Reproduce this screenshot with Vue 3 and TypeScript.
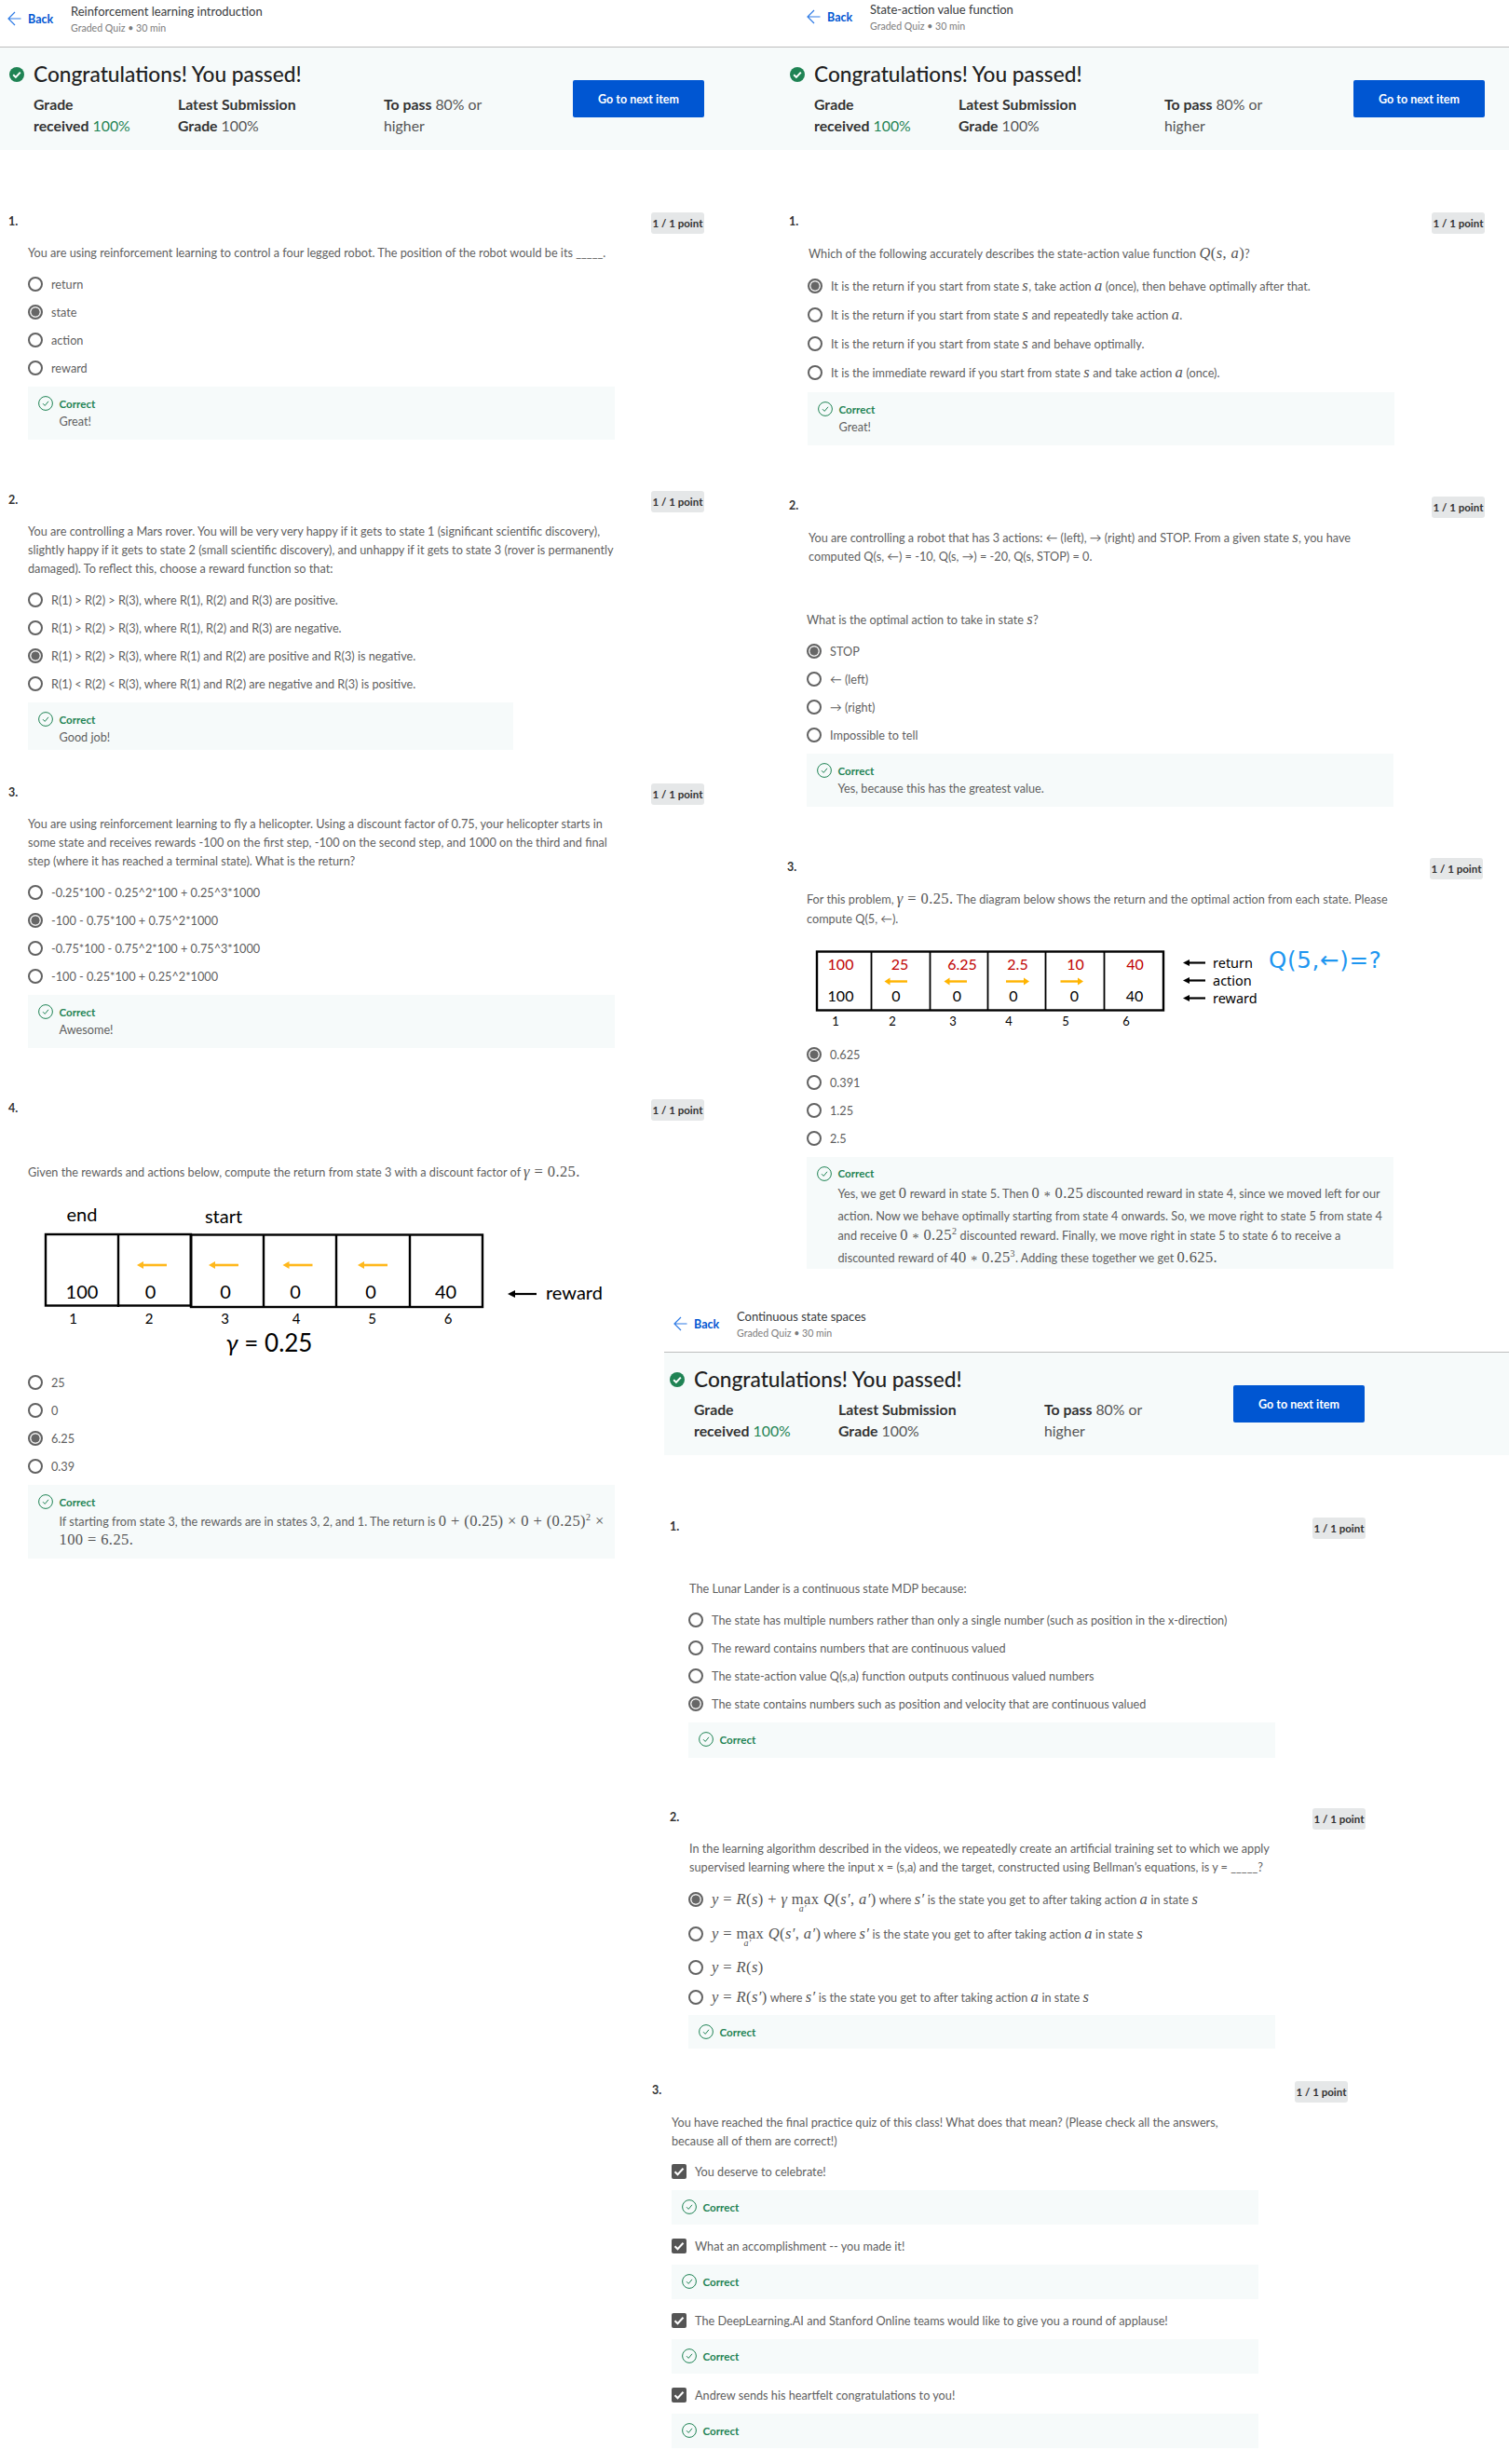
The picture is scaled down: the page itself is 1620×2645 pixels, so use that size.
<script setup lang="ts">
interface Option {
  html: string
  sel?: boolean
  h?: number
  fb?: boolean
}

interface Feedback {
  lines: string[]
  height: number
  lh?: number
  width?: number
}

interface Question {
  num: string
  gap: number
  x?: number
  promptGap: number
  lh?: number
  prompt: string
  prompt2?: string
  prompt2Gap?: number
  figure?: 'rewards' | 'returns'
  figureH?: number
  bodyX?: number
  rowH?: number
  optGap?: number
  check?: boolean
  options: Option[]
  fb?: Feedback
}

interface Quiz {
  cls: string
  title: string
  qx: number
  questions: Question[]
}

const ast = '<span class="ast">*</span>'

const quizzes: Quiz[] = [
  {
    cls: 'panel-a',
    title: 'Reinforcement learning introduction',
    qx: 9,
    questions: [
      {
        num: '1.', gap: 67, promptGap: 10,
        prompt: 'You are using reinforcement learning to control a four legged robot. The position of the robot would be its _____.',
        options: [{ html: 'return' }, { html: 'state', sel: true }, { html: 'action' }, { html: 'reward' }],
        fb: { lines: ['Great!'], height: 57 },
      },
      {
        num: '2.', gap: 55, promptGap: 10,
        prompt: 'You are controlling a Mars rover. You will be very very happy if it gets to state 1 (significant scientific discovery),<br>slightly happy if it gets to state 2 (small scientific discovery), and unhappy if it gets to state 3 (rover is permanently<br>damaged). To reflect this, choose a reward function so that:',
        options: [
          { html: 'R(1) &gt; R(2) &gt; R(3), where R(1), R(2) and R(3) are positive.' },
          { html: 'R(1) &gt; R(2) &gt; R(3), where R(1), R(2) and R(3) are negative.' },
          { html: 'R(1) &gt; R(2) &gt; R(3), where R(1) and R(2) are positive and R(3) is negative.', sel: true },
          { html: 'R(1) &lt; R(2) &lt; R(3), where R(1) and R(2) are negative and R(3) is positive.' },
        ],
        fb: { lines: ['Good job!'], height: 51, width: 521 },
      },
      {
        num: '3.', gap: 36, promptGap: 10,
        prompt: 'You are using reinforcement learning to fly a helicopter. Using a discount factor of 0.75, your helicopter starts in<br>some state and receives rewards -100 on the first step, -100 on the second step, and 1000 on the third and final<br>step (where it has reached a terminal state). What is the return?',
        options: [
          { html: '-0.25*100 - 0.25^2*100 + 0.25^3*1000' },
          { html: '-100 - 0.75*100 + 0.75^2*1000', sel: true },
          { html: '-0.75*100 - 0.75^2*100 + 0.75^3*1000' },
          { html: '-100 - 0.25*100 + 0.25^2*1000' },
        ],
        fb: { lines: ['Awesome!'], height: 57 },
      },
      {
        num: '4.', gap: 55, promptGap: 45,
        prompt: 'Given the rewards and actions below, compute the return from state 3 with a discount factor of <span class="m"><i>γ</i> = 0.25.</span>',
        figure: 'rewards', figureH: 201,
        options: [{ html: '25' }, { html: '0' }, { html: '6.25', sel: true }, { html: '0.39' }],
        fb: {
          lines: ['If starting from state 3, the rewards are in states 3, 2, and 1. The return is <span class="m">0 + (0.25) × 0 + (0.25)<sup>2</sup> ×</span>', '<span class="m">100 = 6.25.</span>'],
          height: 79, lh: 20,
        },
      },
    ],
  },
  {
    cls: 'panel-b',
    title: 'State-action value function',
    qx: 37,
    questions: [
      {
        num: '1.', gap: 67, promptGap: 11, bodyX: -1, rowH: 31.25,
        prompt: 'Which of the following accurately describes the state-action value function <span class="m"><i>Q</i>(<i>s</i>, <i>a</i>)</span>?',
        options: [
          { html: 'It is the return if you start from state <i class="m">s</i>, take action <i class="m">a</i> (once), then behave optimally after that.', sel: true },
          { html: 'It is the return if you start from state <i class="m">s</i> and repeatedly take action <i class="m">a</i>.' },
          { html: 'It is the return if you start from state <i class="m">s</i> and behave optimally.' },
          { html: 'It is the immediate reward if you start from state <i class="m">s</i> and take action <i class="m">a</i> (once).' },
        ],
        fb: { lines: ['Great!'], height: 57 },
      },
      {
        num: '2.', gap: 55, promptGap: 11, bodyX: -2,
        prompt: 'You are controlling a robot that has 3 actions: ← (left), → (right) and STOP. From a given state <i class="m">s</i>, you have<br>computed Q(s, ←) = -10, Q(s, →) = -20, Q(s, STOP) = 0.',
        prompt2: 'What is the optimal action to take in state <i class="m">s</i>?',
        prompt2Gap: 48,
        options: [{ html: 'STOP', sel: true }, { html: '← (left)' }, { html: '→ (right)' }, { html: 'Impossible to tell' }],
        fb: { lines: ['Yes, because this has the greatest value.'], height: 57 },
      },
      {
        num: '3.', gap: 55, x: -2, promptGap: 10, lh: 21,
        prompt: 'For this problem, <span class="m"><i>γ</i> = 0.25.</span> The diagram below shows the return and the optimal action from each state. Please<br>compute Q(5, ←).',
        figure: 'returns', figureH: 119.5,
        options: [{ html: '0.625', sel: true }, { html: '0.391' }, { html: '1.25' }, { html: '2.5' }],
        fb: {
          lines: [
            `Yes, we get <span class="m">0</span> reward in state 5. Then <span class="m">0 ${ast} 0.25</span> discounted reward in state 4, since we moved left for our`,
            'action. Now we behave optimally starting from state 4 onwards. So, we move right to state 5 from state 4',
            `and receive <span class="m">0 ${ast} 0.25<sup>2</sup></span> discounted reward. Finally, we move right in state 5 to state 6 to receive a`,
            `discounted reward of <span class="m">40 ${ast} 0.25<sup>3</sup></span>. Adding these together we get <span class="m">0.625.</span>`,
          ],
          height: 120, lh: 20.6,
        },
      },
    ],
  },
  {
    cls: 'panel-c',
    title: 'Continuous state spaces',
    qx: 19,
    questions: [
      {
        num: '1.', gap: 67, promptGap: 43, bodyX: -1,
        prompt: 'The Lunar Lander is a continuous state MDP because:',
        options: [
          { html: 'The state has multiple numbers rather than only a single number (such as position in the x-direction)' },
          { html: 'The reward contains numbers that are continuous valued' },
          { html: 'The state-action value Q(s,a) function outputs continuous valued numbers' },
          { html: 'The state contains numbers such as position and velocity that are continuous valued', sel: true },
        ],
        fb: { lines: [], height: 38 },
      },
      {
        num: '2.', gap: 54, promptGap: 10, bodyX: -1, optGap: 6,
        prompt: 'In the learning algorithm described in the videos, we repeatedly create an artificial training set to which we apply<br>supervised learning where the input x = (s,a) and the target, constructed using Bellman’s equations, is y = _____?',
        options: [
          { h: 37, sel: true, html: '<span class="m"><i>y</i> = <i>R</i>(<i>s</i>) + <i>γ</i> <span class="mx">max<span class="under"><i>a′</i></span></span> <i>Q</i>(<i>s′</i>, <i>a′</i>)</span> where <i class="m">s′</i> is the state you get to after taking action <i class="m">a</i> in state <i class="m">s</i>' },
          { h: 37, html: '<span class="m"><i>y</i> = <span class="mx">max<span class="under"><i>a′</i></span></span> <i>Q</i>(<i>s′</i>, <i>a′</i>)</span> where <i class="m">s′</i> is the state you get to after taking action <i class="m">a</i> in state <i class="m">s</i>' },
          { h: 36, html: '<span class="m"><i>y</i> = <i>R</i>(<i>s</i>)</span>' },
          { h: 28, html: '<span class="m"><i>y</i> = <i>R</i>(<i>s′</i>)</span> where <i class="m">s′</i> is the state you get to after taking action <i class="m">a</i> in state <i class="m">s</i>' },
        ],
        fb: { lines: [], height: 36 },
      },
      {
        num: '3.', gap: 35, x: -19, promptGap: 11, check: true, optGap: 8,
        prompt: 'You have reached the final practice quiz of this class! What does that mean? (Please check all the answers,<br>because all of them are correct!)',
        options: [
          { html: 'You deserve to celebrate!', fb: true },
          { html: 'What an accomplishment -- you made it!', fb: true },
          { html: 'The DeepLearning.AI and Stanford Online teams would like to give you a round of applause!', fb: true },
          { html: 'Andrew sends his heartfelt congratulations to you!', fb: true },
        ],
      },
    ],
  },
]

const rewardCells = [48, 127, 205, 283, 361, 440, 518]
const rewardValues = [
  { x: 88, t: '100' }, { x: 161.5, t: '0' }, { x: 242, t: '0' },
  { x: 317, t: '0' }, { x: 398, t: '0' }, { x: 478.5, t: '40' },
]
const rewardIndex = [78.5, 160, 241.5, 318, 399.5, 481]
const rewardArrows = [147, 224, 303.5, 384]

const returnCells = [876, 935.5, 998.5, 1060.5, 1122.5, 1185.5, 1249]
const returnTop = [
  { x: 902.5, t: '100' }, { x: 966, t: '25' }, { x: 1033, t: '6.25' },
  { x: 1092.5, t: '2.5' }, { x: 1154.5, t: '10' }, { x: 1218.5, t: '40' },
]
const returnBottom = [
  { x: 902.5, t: '100' }, { x: 962, t: '0' }, { x: 1027.5, t: '0' },
  { x: 1088, t: '0' }, { x: 1153.5, t: '0' }, { x: 1218, t: '40' },
]
const returnIndex = [897, 958, 1023, 1083, 1144, 1209]
const returnLabels = [
  { y: 1033, t: 'return' }, { y: 1052, t: 'action' }, { y: 1071, t: 'reward' },
]
</script>

<template>
  <div class="page">
    <section v-for="quiz in quizzes" :key="quiz.title" class="panel" :class="quiz.cls">
      <header class="hdr">
        <a class="back">
          <svg width="15" height="16" viewBox="0 0 15 16" fill="none" stroke="#2f7be5" stroke-width="1.2">
            <path d="M14.5 8H1M8 1L1 8l7 7" />
          </svg>
          <span>Back</span>
        </a>
        <div>
          <div class="hdr-title">{{ quiz.title }}</div>
          <div class="hdr-sub">Graded Quiz • 30 min</div>
        </div>
      </header>

      <div class="band">
        <div class="band-main">
          <h1 class="band-title">
            <svg width="16" height="16" viewBox="0 0 16 16">
              <circle cx="8" cy="8" r="8" fill="#1f8354" />
              <path d="M4.2 8.2l2.7 2.7 4.9-5.3" fill="none" stroke="#fff" stroke-width="2" />
            </svg>
            Congratulations! You passed!
          </h1>
          <div class="stats">
            <div><b>Grade</b><br><b>received</b> <span class="ok">100%</span></div>
            <div><b>Latest Submission</b><br><b>Grade</b> 100%</div>
            <div><b>To pass</b> 80% or<br>higher</div>
          </div>
        </div>
        <button class="next">Go to next item</button>
      </div>

      <div
        v-for="q in quiz.questions"
        :key="q.num"
        class="q"
        :style="{ marginTop: q.gap + 'px', marginLeft: quiz.qx + (q.x ?? 0) + 'px' }"
      >
        <div class="q-head">
          <span class="q-num">{{ q.num }}</span>
          <span class="q-badge">1 / 1 point</span>
        </div>
        <div class="body">
          <p class="prompt" :style="{ marginTop: q.promptGap + 'px', lineHeight: (q.lh ?? 20) + 'px' }" v-html="q.prompt"></p>
          <div class="shifted" :style="{ marginLeft: (q.bodyX ?? 0) + 'px' }">
            <p v-if="q.prompt2" class="prompt" :style="{ marginTop: q.prompt2Gap + 'px' }" v-html="q.prompt2"></p>

            <svg v-if="q.figure === 'rewards'" class="fig" width="630" :height="q.figureH" viewBox="30 1268 630 201">
              <text class="lbl" x="88" y="1303" font-size="20" text-anchor="middle" dominant-baseline="central">end</text>
              <text class="lbl" x="240" y="1305" font-size="20" text-anchor="middle" dominant-baseline="central">start</text>
              <rect x="49" y="1325" width="156" height="76.5" fill="none" stroke="#000" stroke-width="2.4" />
              <rect x="205" y="1325.5" width="313" height="77.5" fill="none" stroke="#000" stroke-width="2.4" />
              <line v-for="x in rewardCells.slice(1, 6)" :key="x" :x1="x" :x2="x" y1="1325" y2="1403" stroke="#000" stroke-width="2.4" />
              <g v-for="x in rewardArrows" :key="x">
                <path :d="`M${x + 6} 1358H${x + 32}`" stroke="#ffb81c" stroke-width="2.6" />
                <path :d="`M${x} 1358l7-4v8z`" fill="#ffb81c" />
              </g>
              <text v-for="v in rewardValues" :key="v.x" class="lbl" :x="v.x" y="1386" font-size="20" text-anchor="middle" dominant-baseline="central">{{ v.t }}</text>
              <text v-for="(x, i) in rewardIndex" :key="x" class="lbl" :x="x" y="1415" font-size="15" text-anchor="middle" dominant-baseline="central">{{ i + 1 }}</text>
              <text class="lbl" x="289" y="1441" font-size="26" text-anchor="middle" dominant-baseline="central"><tspan font-style="italic">γ</tspan> = 0.25</text>
              <path d="M551 1389H576" stroke="#000" stroke-width="2.2" />
              <path d="M545 1389l8-4v8z" fill="#000" />
              <text class="lbl" x="586" y="1387" font-size="20" dominant-baseline="central">reward</text>
            </svg>

            <svg v-if="q.figure === 'returns'" class="fig" width="630" :height="q.figureH" viewBox="866 997.5 630 119.5">
              <rect x="877" y="1022" width="372" height="63" fill="none" stroke="#000" stroke-width="2.4" />
              <line v-for="x in returnCells.slice(1, 6)" :key="x" :x1="x" :x2="x" y1="1022" y2="1085" stroke="#000" stroke-width="1.8" />
              <text v-for="v in returnTop" :key="v.x" class="lbl" :x="v.x" y="1035" font-size="16" fill="#c00000" text-anchor="middle" dominant-baseline="central">{{ v.t }}</text>
              <text v-for="v in returnBottom" :key="v.x" class="lbl" :x="v.x" y="1069" font-size="16" text-anchor="middle" dominant-baseline="central">{{ v.t }}</text>
              <g fill="#ffb400">
                <path d="M954 1054H974" stroke="#ffb400" stroke-width="2.4" /><path d="M949.5 1054l6-4v8z" />
                <path d="M1018 1054H1038" stroke="#ffb400" stroke-width="2.4" /><path d="M1013.5 1054l6-4v8z" />
                <path d="M1080 1054H1100" stroke="#ffb400" stroke-width="2.4" /><path d="M1105 1054l-6-4v8z" />
                <path d="M1138.5 1054H1158" stroke="#ffb400" stroke-width="2.4" /><path d="M1163 1054l-6-4v8z" />
              </g>
              <text v-for="(x, i) in returnIndex" :key="x" class="lbl" :x="x" y="1096" font-size="13" text-anchor="middle" dominant-baseline="central">{{ i + 1 }}</text>
              <g v-for="l in returnLabels" :key="l.t">
                <path :d="`M1275 ${l.y + 1}H1294`" stroke="#000" stroke-width="2.2" />
                <path :d="`M1270 ${l.y + 1}l7-3.6v7.2z`" />
                <text class="lbl-sm" x="1302" :y="l.y" font-size="14.5" dominant-baseline="central">{{ l.t }}</text>
              </g>
              <text class="hand" x="1362" y="1031" font-size="24.5" dominant-baseline="central">Q(5,←)=?</text>
            </svg>

            <template v-for="(o, i) in q.options" :key="o.html">
              <div class="opt" :style="{ height: (o.h ?? q.rowH ?? 30) + 'px', marginTop: i === 0 && !q.figure ? (q.optGap ?? 9) + 'px' : undefined }">
                <span v-if="q.check" class="box">
                  <svg width="16" height="16" viewBox="0 0 16 16">
                    <path d="M3.5 8.2l3 3 6-6.4" fill="none" stroke="#fff" stroke-width="2" />
                  </svg>
                </span>
                <span v-else class="radio" :class="{ on: o.sel }"></span>
                <span class="opt-text" v-html="o.html"></span>
              </div>
              <div v-if="o.fb" class="fb fb-row">
                <svg class="fb-ico" width="16" height="16" viewBox="0 0 16 16" fill="none" stroke="#1f8354">
                  <circle cx="8" cy="8" r="7.4" />
                  <path d="M5 8.2l2.2 2.2 3.8-4.6" />
                </svg>
                <div><div class="fb-ok">Correct</div></div>
              </div>
            </template>

            <div v-if="q.fb" class="fb" :style="{ height: q.fb.height + 'px', width: (q.fb.width ?? 630) + 'px', lineHeight: (q.fb.lh ?? 19) + 'px' }">
              <svg class="fb-ico" width="16" height="16" viewBox="0 0 16 16" fill="none" stroke="#1f8354">
                <circle cx="8" cy="8" r="7.4" />
                <path d="M5 8.2l2.2 2.2 3.8-4.6" />
              </svg>
              <div>
                <div class="fb-ok">Correct</div>
                <div v-for="l in q.fb.lines" :key="l" v-html="l"></div>
              </div>
            </div>
          </div>
        </div>
      </div>
    </section>
  </div>
</template>

<style scoped>
.page {
  display: grid;
  grid-template-columns: 700px 110px 810px;
  grid-template-rows: 1401px 1244px;
  width: 1620px;
  height: 2645px;
  overflow: hidden;
  background: #fff;
  color: #5f5f5f;
  font-family: Lato, "Noto Sans", sans-serif;
  font-size: 12.7px;
}

.panel-a {
  grid-column: 1 / 3;
  grid-row: 1 / 3;
}

.panel-b {
  grid-column: 3;
  grid-row: 1;
}

.panel-c {
  grid-column: 2 / 4;
  grid-row: 2;
}

.hdr {
  display: flex;
  align-items: flex-start;
  height: 51px;
  padding-top: 3px;
  padding-left: 8px;
  border-bottom: 1px solid #bdbdbd;
  box-sizing: border-box;
}

.panel-b .hdr {
  padding-top: 1px;
  padding-left: 56px;
}

.panel-c .hdr {
  margin-left: 13px;
  padding-left: 10px;
}

.back {
  display: flex;
  align-items: center;
  gap: 7px;
  width: 68px;
  height: 34px;
  color: #0056d2;
  font-weight: 700;
  font-size: 12.5px;
}

.hdr-title {
  color: #373a3c;
  font-size: 13px;
  line-height: 18px;
}

.hdr-sub {
  color: #7c7c7c;
  font-size: 10.6px;
  line-height: 18px;
}

.band {
  display: flex;
  align-items: flex-start;
  height: 110px;
  padding-top: 14px;
  padding-left: 10px;
  background: #f6fafa;
  box-sizing: border-box;
}

.panel-b .band {
  padding-left: 38px;
}

.panel-c .band {
  margin-left: 13px;
  padding-left: 6px;
}

.band-main {
  width: 605px;
}

.band-title {
  display: flex;
  align-items: center;
  gap: 10px;
  margin: 0;
  color: #1f1f1f;
  font-size: 22.7px;
  font-weight: 500;
  line-height: 30px;
}

.stats {
  display: grid;
  grid-template-columns: 155px 221px auto;
  margin-top: 5px;
  margin-left: 26px;
  color: #555;
  font-size: 15.8px;
  line-height: 23px;
}

.stats b {
  color: #333;
  font-weight: 700;
}

.ok {
  color: #1f8354;
}

.next {
  width: 141px;
  height: 40px;
  margin-top: 21px;
  border: 0;
  border-radius: 2px;
  background: #0056d2;
  color: #fff;
  font-family: inherit;
  font-size: 12.5px;
  font-weight: 700;
}

.q {
  width: 747px;
}

.q-head {
  display: flex;
  justify-content: space-between;
}

.q-num {
  color: #333;
  font-weight: 700;
  font-size: 12.5px;
  line-height: 20px;
}

.q-badge {
  display: flex;
  align-items: center;
  justify-content: center;
  width: 57px;
  height: 23px;
  border-radius: 3px;
  background: #e5e7e8;
  color: #333;
  font-size: 11.5px;
  font-weight: 700;
}

.body {
  margin-left: 21px;
}

.prompt {
  margin: 0;
  line-height: 20px;
  white-space: nowrap;
}

.fig {
  display: block;
}

.lbl {
  font-family: Lato, sans-serif;
}

.lbl-sm {
  font-family: "Noto Sans", sans-serif;
}

.hand {
  fill: #1e96f0;
  font-family: "DejaVu Sans", sans-serif;
  letter-spacing: 0.7px;
}

.opt {
  display: flex;
  align-items: center;
  gap: 9px;
}

.radio {
  flex: none;
  width: 16px;
  height: 16px;
  border: 2px solid #626262;
  border-radius: 50%;
  box-sizing: border-box;
}

.radio.on {
  background: radial-gradient(circle, #666 0 4.2px, #ececec 4.8px);
}

.box {
  display: block;
  flex: none;
  width: 16px;
  height: 16px;
  border-radius: 2px;
  background: #555;
}

.opt-text {
  white-space: nowrap;
}

.fb {
  display: flex;
  gap: 7px;
  margin-top: 5px;
  padding: 8.5px 0 0 10.5px;
  background: #f6fafa;
  box-sizing: border-box;
  white-space: nowrap;
}

.fb-row {
  width: 630px;
  height: 37px;
  margin-bottom: 8px;
  line-height: 19px;
}

.fb-ico {
  flex: none;
  margin-top: 1.5px;
}

.fb-ok {
  color: #1f8354;
  font-size: 11.6px;
  font-weight: 700;
}

:deep(.m) {
  color: #555;
  font-family: "Liberation Serif", serif;
  font-size: 16.5px;
  letter-spacing: 0.4px;
}

:deep(.m sup) {
  font-size: 10px;
  line-height: 0;
}

:deep(.ast) {
  font-size: 14px;
  vertical-align: -3px;
}

:deep(.mx) {
  position: relative;
  display: inline-block;
}

:deep(.under) {
  position: absolute;
  left: 8px;
  top: 14px;
  font-size: 10px;
}
</style>
